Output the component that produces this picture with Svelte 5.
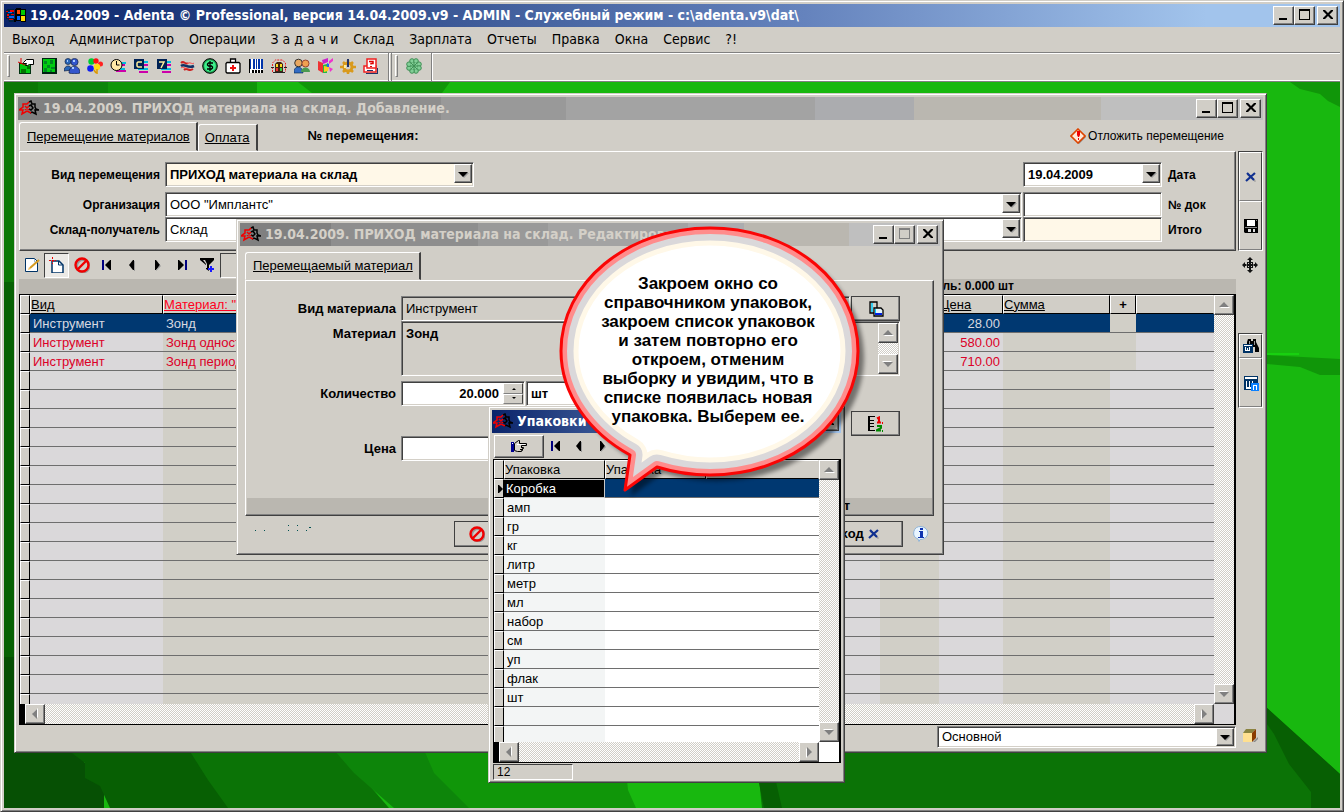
<script>
  const menu = ['Выход', 'Администратор', 'Операции', 'З а д а ч и', 'Склад', 'Зарплата', 'Отчеты', 'Правка', 'Окна', 'Сервис', '?!'];

  const icons = {
    windows: '<path fill="#000" d="M10 1h5v1h5v13h-5v-1h-5v1H8v-3h1V2h1z"/><path fill="#f40" d="M11 3h3v4h-3z"/><path fill="#0c0" d="M15 3h4v5h-4z"/><path fill="#06f" d="M11 9h3v4h-3z"/><path fill="#fd0" d="M15 9h4v5h-4z"/><path fill="#024" d="M1 2h7v13H3l-1-3H0V3h1z"/><path fill="#e00" d="M0 4h2v1H0zM4 3h4v2H4zM1 7h2v2H1zM5 7h3v1H5z"/><path fill="#06f" d="M2 5h4v1H2zM3 9h5v2H3z"/><path fill="#e00" d="M3 12h4v1H3zM1 10h2v1H1z"/>',
    exit: '<path fill="#031" d="M1 5h12v11H1z"/><path fill="#0c1" d="M2 6h10v9H2z"/><path fill="#070" d="M3 11h5v4H3zM9 8h3v3H9z"/><path fill="#fff" stroke="#000" d="M5.500 4.500l3-3h7v5h-4l-2 1h-2l1-2h-3z"/><path fill="none" stroke="#d00" d="M0 4l7 3M3 0v6"/>',
    square: '<path fill="#021" d="M1 0h15v16H1z"/><path fill="#0c1" d="M2 1h12v13H2z"/><path fill="#082" d="M3 3h3v3H3zM9 2h3v4H9zM6 7h3v3H6zM3 10h3v4H3zM10 9h4v2h-4zM9 12h2v2H9z"/>',
    people: '<g fill="#2a66b8" stroke="#124" stroke-width=".7"><circle cx="4" cy="3.500" r="3"/><path d="M0 13c0-6 7-7 8-1z"/><circle cx="10.500" cy="4" r="3.600" fill="#35c"/><path fill="#35c" d="M5 15c0-9 11-9 11 0-2 1-9 1-11 0z"/></g><path fill="#acf" d="M9 2h2v2H9zM8 9h2v2H8zM3 2h1v2H3z"/>',
    balloons: '<circle cx="4.500" cy="3.500" r="3.200" fill="#0c3"/><circle cx="9" cy="3" r="2.700" fill="#f11"/><circle cx="13.500" cy="6" r="2.500" fill="#f22"/><circle cx="3.500" cy="10.500" r="3.300" fill="#12e"/><circle cx="10" cy="9" r="3.200" fill="#fd1"/><path fill="none" stroke="#d90" stroke-width="1.500" d="M10 11v5M7 12l2 3"/>',
    clock: '<path fill="#0bd" d="M8 4h8v2H8zM6 10h9v2H6z"/><path fill="#c0a" d="M9 6h6v2H9zM6 12h10v2H6z"/><circle cx="6.500" cy="7" r="5.500" fill="#ffe9a8" stroke="#000"/><path fill="none" stroke="#000" d="M6.500 3v4h3"/>',
    cdoc: '<path fill="#0bd" d="M8 3h7v2H8zM5 10h10v2H5z"/><path fill="#c0a" d="M9 6h6v2H9zM6 13h9v2H6z"/><path fill="#025" d="M1 1h10v10H1z"/><path fill="none" stroke="#fe9" stroke-width="1.500" d="M9 4H5L4 5v3l1 1h4"/>',
    seven: '<path fill="#0bd" d="M8 3h7v2H8zM5 10h10v2H5z"/><path fill="#c0a" d="M9 6h6v2H9zM6 13h9v2H6z"/><path fill="#025" d="M1 1h10v10H1z"/><path fill="none" stroke="#fe9" stroke-width="1.500" d="M3 4h5L5 10"/>',
    flags: '<path fill="none" stroke="#c22" stroke-width="2" d="M2 5c3-3 4 2 7 0M5 12c3-3 5 2 9-1"/><path fill="none" stroke="#136" stroke-width="2.500" d="M2 8c4-3 6 3 13 0"/><path fill="none" stroke="#f44" d="M8 6c3-3 5 1 7-1M2 10c2-2 4 1 6 0"/>',
    dollar: '<circle cx="8" cy="8" r="7.300" fill="#1e9a4e" stroke="#000"/><circle cx="8" cy="8" r="5.800" fill="#3df08c"/><path fill="none" stroke="#000" stroke-width="1.300" d="M11 5H6.500L5.500 6v1l1 1h3l1 1v1l-1 1H5M8 3v10"/>',
    medkit: '<path fill="#fff" stroke="#000" stroke-width="1.300" d="M2 4.500h12l1 1V14l-1 1H2l-1-1V5.500zM5.500 4V1h5v3"/><path fill="#e11" d="M7 7h2v2h2v2H9v2H7v-2H5V9h2z"/>',
    barcode: '<path fill="#fff" d="M1 1h14v14H1z"/><path fill="#03a" d="M2 1h1v10H2zM5 1h2v10H5zM8 1h1v10H8zM10 1h2v10h-2zM13 1h2v10h-2z"/><path fill="#000" d="M1 1h1v14H1zM4 12h2v3H4zM7 12h2v3H7zM10 12h2v3h-2zM13 12h2v3h-2z"/>',
    gate: '<path fill="none" stroke="#e22" stroke-dasharray="2 1" d="M1.500 14V5l3-3h7l3 3v9"/><path fill="#421" d="M4 6l2-2h4l2 2v8H4z"/><path fill="#fd2" d="M5 6h2v3H5zM9 6h2v3H9z"/><path fill="#e33" d="M5 10h2v3H5z"/><path fill="#3c4" d="M9 10h2v3H9z"/><path fill="#222" d="M0 9h3v1H0zM13 9h3v1h-3zM2 14h12v1H2z"/>',
    couple: '<circle cx="4.500" cy="5" r="3.800" fill="#e9a860" stroke="#333"/><path fill="#336cc4" stroke="#024" stroke-width=".6" d="M0 15c-1-8 9-8 9 0z"/><circle cx="11.500" cy="5.500" r="3.500" fill="#f0a050" stroke="#943"/><path fill="#4a9a50" d="M7 14c0-6 9-6 9 0z"/>',
    chart: '<path fill="#e33" d="M1 3l5 2v10l-5-3z"/><path fill="#c2c" d="M5 2l6-2v4l-5 2z"/><path fill="#2b4" d="M6 7l4-1v9H6z"/><path fill="#fc2" d="M7 8l5 1-1 4-4 1z"/><path fill="#e3c" d="M12 3l4-3v3l-4 3zM12 9l4 2-3 3z"/><path fill="#26e" d="M10 5l2 1v3h-2z"/>',
    gear: '<circle cx="8" cy="9" r="4" fill="none" stroke="#d99a1c" stroke-width="3"/><path stroke="#d99a1c" stroke-width="2.500" d="M8 2v3M8 13v3M0 9h3M13 9h3M3 4l2 2M13 4l-2 2M3 14l2-2M13 14l-2-2"/><path fill="#236" d="M7 1h2v8H7z"/><path fill="#fe9" d="M4 7h2v3H4z"/>',
    helpdoc: '<path fill="#236" d="M14 10h1v6H3v-1h11z"/><path fill="#fff" stroke="#e22" stroke-width="1.500" d="M1 8h12v6H1z"/><path fill="#fff" stroke="#e22" stroke-width="1.500" d="M4 1h9v9H4z"/><path fill="none" stroke="#d00" stroke-width="1.500" d="M6 3.500h4v2H8v1"/><path fill="#d00" d="M7 8h2v1H7z"/><path fill="#236" d="M4 12h6v1H4z"/>',
    flower: '<g fill="#82cf97" stroke="#3f8f55"><circle cx="6" cy="3" r="2.300"/><circle cx="10" cy="3" r="2.300"/><circle cx="13" cy="6.200" r="2.300"/><circle cx="13" cy="10" r="2.300"/><circle cx="10" cy="13" r="2.300"/><circle cx="6" cy="13" r="2.300"/><circle cx="3" cy="10" r="2.300"/><circle cx="3" cy="6.200" r="2.300"/></g><circle cx="8" cy="8" r="3.500" fill="#82cf97"/><path stroke="#3f8f55" d="M4 8h8M8 4v8M5 5l6 6M11 5l-6 6"/>',
    bird: '<path fill="none" stroke="#000" stroke-width="1.500" d="M10 2l2-1 1 3h3v3l1 2 3 1h-4l1 4-4-2-2 1M10 6l2-1 2 3-2 2-2-1"/><path fill="none" stroke="#f00000" stroke-width="1.500" d="M10 2L8 4H4v3l-4 3h4l-1 4 5-3 4 2M6 6l4 4M6 10l4-4"/>',
    edit: '<path fill="#fff" stroke="#036" d="M1.500 1.500h9l3 3v10h-12z"/><path fill="none" stroke="#9bd" d="M10.500 2v3h3"/><path stroke="#d69a20" stroke-width="2" d="M6 11l9-8"/><path fill="#f0c060" d="M5 10l2 2-3 1z"/>',
    add: '<path fill="#fff" stroke="#036" stroke-width="1.500" d="M3 4h7l4 4v8H3z"/><path fill="none" stroke="#036" d="M9.500 4v4h4"/><path stroke="#e00" d="M0 3.500h7M3.500 0v7" stroke-dasharray="2 1"/>',
    deny: '<circle cx="9" cy="9" r="6.200" fill="none" stroke="#999" stroke-width="2.500"/><circle cx="8" cy="8" r="6.500" fill="none" stroke="#f00000" stroke-width="2.400"/><path stroke="#f00000" stroke-width="2.400" d="M4 12l8-8"/>',
    first: '<path fill="#000080" d="M3 3h2v10H3z"/><path fill="#000" d="M6 8l5-5h1v10h-1z"/>',
    prev: '<path fill="#000" d="M5 8l4-5h1v10H9z"/><path fill="#999" d="M10 4h1v10h-1z"/>',
    next: '<path fill="#000" d="M11 8L7 3H6v10h1z"/><path fill="#999" d="M11 8l1 1-5 5v-1z"/>',
    last: '<path fill="#000" d="M10 8L5 3H4v10h1z"/><path fill="#000080" d="M11 3h2v10h-2z"/>',
    filter: '<path fill="#000" d="M1 1h14v2l-5 5v6l-3-2V8L1 3z"/><path fill="#d1cec7" d="M4 3h2l2 4v4H7V7z"/><path fill="#1a1aff" d="M11 9h2v2h2v2h-2v2h-2v-2H9v-2h2z"/>',
    x: '<path fill="#999" d="M5 5l8 7-1 1-8-7z"/><path stroke="#103090" stroke-width="2.200" d="M4 4l7 7M12 4l-9 8"/>',
    disk: '<path fill="#000" d="M1 1h14v14H2l-1-1z"/><path fill="#fff" d="M4 2h8v6H4z"/><path fill="#888" d="M13 2h1v1h-1zM2 9h12v1H2z"/><path fill="#ddd" d="M5 11h3v3H5zM10 11h2v3h-2z"/>',
    move: '<path fill="#111" d="M8 0l3 3H9v2h2v2h2V5l3 3-3 3V9h-2v2H9v2h2l-3 3-3-3h2v-2H5V9H3v2L0 8l3-3v2h2V5h2V3H5z"/><path fill="#d1cec7" d="M6 6h1v1H6zM9 6h1v1H9zM6 9h1v1H6zM9 9h1v1H9zM4 7.500h1v1H4zM11 7.500h1v1h-1z"/>',
    find: '<path fill="#000" d="M5 1h3v2h2V1h3v3l3 6v4h-4V9H8L4 8V4z"/><path fill="#999" d="M6 3h1v3H6zM11 3h1v4h-1z"/><path fill="#036" d="M0 6h10v9H0z"/><path fill="#fff" d="M1 7h8v1H1zM2 9h1v3h1v-2h1v2h1V9h1v4H2z"/>',
    word: '<path fill="#036" d="M1 1h14v14H1z"/><path fill="#fff" d="M2 2h12v2H2zM3 6h1v6h2V6h1v6h2V6h1v3h3v1h-3v4H3z"/><path fill="#0a80ff" d="M8 8h8v8H8z"/><path fill="#fff" d="M10 10h4v5h-1v-4h-2v4h-1z"/>',
    warn: '<path fill="#888" d="M9 2l7 7-7 7-1-1z"/><path fill="#ffe8d8" stroke="#dd4400" stroke-width="1.600" d="M8 1l7 7-7 7-7-7z"/><path fill="#f00000" d="M7 3h3v4L9 9H8L7 7zM8 10h1v2H8z"/>',
    box: '<path fill="#888" d="M11 14l5-5v2l-3 3z"/><path fill="#ffe090" d="M1 5h9v9H1z"/><path fill="#8a8440" d="M1 5l3-4h10l-4 4z"/><path fill="#8a3c00" d="M10 5l4-4v9l-4 4z"/>',
    hand: '<path fill="#000090" d="M0 4h3v10H0z"/><path fill="#fff" d="M1 5h1v1H1z"/><path fill="#d8d4cc" stroke="#000" d="M3.500 5.500l4-3h1v3h7v2h-5v2h2v1h-1v2h-1v1h-4l-3-1z"/><path fill="#fff" d="M6 6h8v1H6z"/><path stroke="#000" d="M10 9.500h2M9 11.500h2"/>',
    copy: '<path fill="#d1cfc7" stroke="#000" stroke-width="1.300" d="M2 1h7v11H2z"/><path stroke="#0cf" stroke-width="1.500" d="M4 2v9"/><path fill="#e4f4f8" stroke="#000" stroke-width="1.300" d="M6 7h7l2 2v6H6z"/><path fill="#0020e0" d="M7 12h7v2H7z"/><path fill="#0cf" d="M7 8h1v4H7z"/>',
    numbered: '<path fill="#000" d="M0 0h7v1H2v3h4v1H2v2h4v1H2v2h4v1H2v3h5v1H0z"/><path fill="none" stroke="#e00" stroke-width="2" d="M9 2.500l2-1v5M9 6.500h4"/><path fill="none" stroke="#080" stroke-width="2" d="M9 10h4v2l-4 2v.500h4"/><path fill="#e00" d="M14 6h1v2h-1z"/><path fill="#080" d="M14 14h1v2h-1z"/>',
    info: '<path fill="#e8f4ff" stroke="#8fb4d8" d="M8 .500a7.300 6.500 0 1 1-1 13l-1 2-1-2.500A7 6.500 0 0 1 8 .500z"/><path fill="#1034b0" d="M7 2h3v2H7zM6 5h4v6h1v1H5v-1h2V6H6z"/>'
  };

  const tools = ['exit', 'square', 'people', 'balloons', 'clock', 'cdoc', 'seven', 'flags', 'dollar', 'medkit', 'barcode', 'gate', 'couple', 'chart', 'gear', 'helpdoc'];
  const gridTools = ['edit', 'add', 'deny', 'first', 'prev', 'next', 'last', 'filter'];
  const goods = [
    { kind: 'Инструмент', name: 'Зонд', price: '28.00' },
    { kind: 'Инструмент', name: 'Зонд односторонний', price: '580.00' },
    { kind: 'Инструмент', name: 'Зонд периодонтальный', price: '710.00' }
  ];
  const goodsRows = [...goods, ...Array(40).fill(null)];
  const packs = ['Коробка', 'амп', 'гр', 'кг', 'литр', 'метр', 'мл', 'набор', 'см', 'уп', 'флак', 'шт', '', ''];
  const balloonPath = 'M630 455C590 433 561 395 561 351C561 283 627 228 710 228S858 283 858 351S793 475 710 475Q683 475 657 467L625 490Z';
</script>

{#snippet icon(name, w = 16)}
  <svg class="ico" viewBox="0 0 {w} 16" width={w} height="16" aria-hidden="true">{@html icons[name]}</svg>
{/snippet}

{#snippet caption(closeOnly, maxOff)}
  <span class="caps">
    {#if !closeOnly}
      <button class="cap" aria-label="Свернуть"><svg viewBox="0 0 16 14" width="16" height="14"><path d="M3 10h8v2H3z" /></svg></button>
      <button class="cap" class:off={maxOff} aria-label="Развернуть"><svg viewBox="0 0 16 14" width="16" height="14"><path fill-rule="evenodd" d="M2 1h11v11H2zM3 3h9v8H3z" /></svg></button>
    {/if}
    <button class="cap close" aria-label="Закрыть"><svg viewBox="0 0 16 14" width="16" height="14"><path d="M3 2h2l3 3 3-3h2v1L9.500 6.500 13 10v1h-2L8 8l-3 3H3v-1l3.500-3.500L3 3z" /></svg></button>
  </span>
{/snippet}

{#snippet arrow(dir)}
  <span class="sb"><svg viewBox="0 0 16 16" width="16" height="16" aria-hidden="true"><g transform="rotate({dir} 8 8)"><path fill="#fff" d="M4 11l5-5 5 5z" /><path fill="#808080" d="M3 10l5-5 5 5z" /></g></svg></span>
{/snippet}

{#snippet combo(id, value, cls)}
  <span class="combo {cls}">
    <select {id} aria-label={id === 'mode' ? 'Режим' : undefined}><option>{value}</option></select>
    <span class="drop"><svg viewBox="0 0 14 14" width="14" height="14" aria-hidden="true"><path fill="#999" d="M4 6h9l-5 5z" /><path d="M2 5h10L7 10z" /></svg></span>
  </span>
{/snippet}

<div class="app">
  <header class="title active">
    {@render icon('windows', 20)}
    <h1>19.04.2009 - Adenta © Professional, версия 14.04.2009.v9 - ADMIN - Служебный режим - c:\adenta.v9\dat\</h1>
    {@render caption(false, false)}
  </header>
  <nav class="menu">
    {#each menu as m}<button>{m}</button>{/each}
  </nav>
  <div class="toolbar">
    <div class="band">
      <i class="grip"></i>
      {#each tools as t}<button aria-label={t}>{@render icon(t)}</button>{/each}
    </div>
    <div class="band">
      <i class="grip"></i>
      <button aria-label="flower">{@render icon('flower')}</button>
    </div>
  </div>

  <main class="desk">
    <svg class="wall" viewBox="0 0 1336 726" preserveAspectRatio="none" aria-hidden="true">
      <path fill="#18b80f" d="M0 0h1336v726H0z" />
      <path fill="#109609" d="M0 0h253v20H0zM294 0l14 11h130l8-11z" />
      <path fill="#0d850a" d="M0 0h104v20H0z" />
      <path fill="#0c7806" d="M0 0h34v400H0z" />
      <path fill="#109609" d="M1286 0h50v25l-12-6-8-7-20-5zM1263 273l73 4v16h-20l-20-8-33-3z" />
      <path fill="#18d010" d="M1263 271h32v2h-32z" />
      <path fill="#086204" d="M0 200h20v526H0z" />
      <path fill="#065004" d="M0 575h10v80h70v25l20 20v26H0z" />
      <path fill="#075f03" d="M64 668h126l36 58H106l-10-22-15-8v-15z" />
      <path fill="#0b7306" d="M185 668h150l50 58H224l-20-28z" />
      <path fill="#0d850a" d="M330 668h90l50 58h-80l-40-35z" />
      <path fill="#109609" d="M420 668h200l4 40 8 18H465l-35-35z" />
      <path fill="#0b7306" d="M752 668h520l56 58H758z" />
      <path fill="#075f03" d="M748 665h16l14 61h-18z" />
      <path fill="#0b7306" d="M1263 626l73 66v34h-73z" />
      <path fill="#075f03" d="M1263 626l73 66v34h-29v-16l-22-28-15-30-7-10z" />
    </svg>

    <section class="win w1">
      <header class="title">
        {@render icon('bird', 20)}
        <h2>19.04.2009. ПРИХОД материала на склад. Добавление.</h2>
        {@render caption(false, false)}
      </header>
      <div class="tabs">
        <button class="tab on">Перемещение материалов</button>
        <button class="tab">Оплата</button>
        <b class="num">№ перемещения:</b>
        <button class="later">{@render icon('warn')}Отложить перемещение</button>
      </div>
      <div class="cols">
        <div class="left">
          <div class="panel form">
            <label for="kind">Вид перемещения</label>
            {@render combo('kind', 'ПРИХОД материала на склад', 'cream bold short')}
            {@render combo('date', '19.04.2009', 'bold')}
            <label class="r" for="date">Дата</label>
            <span class="space"></span>
            <label for="org">Организация</label>
            {@render combo('org', 'ООО "Имплантс"', '')}
            <input id="doc" />
            <label class="r" for="doc">№ док</label>
            <label for="store">Склад-получатель</label>
            {@render combo('store', 'Склад', '')}
            <input id="total" class="cream" />
            <label class="r" for="total">Итого</label>
          </div>
          <div class="gridtools">
            {#each gridTools as t}<button class:pressed={t === 'add'} aria-label={t}>{@render icon(t)}</button>{/each}
            <span class="well"></span>
          </div>
          <div class="strip">Прибыль: 0.000 шт</div>
          <div class="grid">
            <div class="view">
              <table>
                <colgroup><col class="c-sel" /><col class="c-kind" /><col /><col class="c-a" /><col class="c-b" /><col class="c-price" /><col class="c-sum" /><col class="c-plus" /><col class="c-rest" /></colgroup>
                <thead><tr><th></th><th><u>Вид</u></th><th><u class="red">Материал: "Зонд"</u></th><th></th><th></th><th><u>Цена</u></th><th><u>Сумма</u></th><th class="c">+</th><th class="end"></th></tr></thead>
                <tbody>
                  {#each goodsRows as g, i}
                    <tr class:sel={i === 0} class:data={g}>
                      <td class="mark"></td><td>{g?.kind ?? ''}</td><td class="dk">{g?.name ?? ''}</td><td></td><td class="dk"></td><td class="n">{g?.price ?? ''}</td><td class="dk"></td><td class="plus"></td><td></td>
                    </tr>
                  {/each}
                </tbody>
              </table>
            </div>
            <div class="vs">{@render arrow(0)}{@render arrow(180)}</div>
            <div class="hs">{@render arrow(-90)}{@render arrow(90)}</div>
            <div class="corner"></div>
          </div>
          <div class="foot">{@render combo('mode', 'Основной', '')}</div>
        </div>
        <aside class="side">
          <div class="well2"><button aria-label="Отмена">{@render icon('x')}</button><button aria-label="Сохранить">{@render icon('disk')}</button></div>
          <div class="mv">{@render icon('move')}</div>
          <div class="well2 b"><button aria-label="Найти">{@render icon('find')}</button><button aria-label="Документ">{@render icon('word')}</button></div>
          <div class="bx">{@render icon('box')}</div>
        </aside>
      </div>
    </section>

    <section class="win w2">
      <header class="title">
        {@render icon('bird', 20)}
        <h2>19.04.2009. ПРИХОД материала на склад. Редактирование.</h2>
        {@render caption(false, true)}
      </header>
      <div class="tabs2"><button class="tab on">Перемещаемый материал</button></div>
      <div class="panel p2">
        <div class="row">
          <label for="mkind">Вид материала</label>
          <input id="mkind" class="grey" value="Инструмент" />
          <button class="btn" aria-label="Копировать">{@render icon('copy')}</button>
        </div>
        <div class="row memo">
          <label for="mat">Материал</label>
          <span class="area"><textarea id="mat" value="Зонд"></textarea><span class="vs">{@render arrow(0)}{@render arrow(180)}</span></span>
        </div>
        <div class="row qty">
          <label for="qty">Количество</label>
          <span class="spin"><input id="qty" value="20.000" /><span class="ud"><button aria-label="Больше"><svg viewBox="0 0 5 3" width="5" height="3"><path d="M1 3h4L3 1z" /></svg></button><button aria-label="Меньше"><svg viewBox="0 0 5 3" width="5" height="3"><path d="M1 0h4L3 2z" /></svg></button></span></span>
          <input class="unit" aria-label="Единица" value="шт" />
        </div>
        <div class="row end"><button class="btn" aria-label="Нумерация">{@render icon('numbered')}</button></div>
        <div class="row">
          <label for="price">Цена</label>
          <input id="price" class="price" />
        </div>
        <div class="sum">Итого: 20.000 шт</div>
      </div>
      <div class="acts">
        <svg class="dots" viewBox="0 0 60 8" width="60" height="8" aria-hidden="true"><path fill="#005050" d="M0 5h1v1H0zM9 5h1v1H9zM33 0h1v1h-1zM33 5h1v1h-1zM42 0h1v1h-1zM42 5h1v1h-1zM51 5h1v1h-1zM54 2h2v1h-2z" /></svg>
        <button class="btn no" aria-label="Отмена">{@render icon('deny')}</button>
        <button class="btn out">Выход {@render icon('x')}</button>
        {@render icon('info')}
      </div>
    </section>

    <section class="win w3">
      <header class="title active">
        {@render icon('bird', 20)}
        <h2>Упаковки</h2>
        {@render caption(true, false)}
      </header>
      <div class="tools3">
        <button class="btn" aria-label="Выбрать">{@render icon('hand')}</button>
        {#each ['first', 'prev', 'next'] as t}<button class="flat" aria-label={t}>{@render icon(t)}</button>{/each}
      </div>
      <div class="grid g3">
        <div class="view">
          <table>
            <colgroup><col class="c-sel" /><col class="c-pack" /><col class="c-pack" /><col /></colgroup>
            <thead><tr><th></th><th>Упаковка</th><th>Упаковка</th><th class="end"></th></tr></thead>
            <tbody>
              {#each packs as p, i}
                <tr class:sel={i === 0}><td class="mark">{#if i === 0}<svg viewBox="0 0 5 8" width="5" height="8" aria-hidden="true"><path d="M0 0h1l4 4-4 4H0z" /></svg>{/if}</td><td class="pk">{p}</td><td></td><td></td></tr>
              {/each}
            </tbody>
          </table>
        </div>
        <div class="vs">{@render arrow(0)}{@render arrow(180)}</div>
        <div class="hs">{@render arrow(-90)}{@render arrow(90)}</div>
        <div class="corner"></div>
      </div>
      <div class="count">12</div>
    </section>

    <div class="balloon">
      <svg viewBox="550 220 330 290" width="330" height="290" aria-hidden="true">
        <defs>
          <clipPath id="bc"><path d={balloonPath} /></clipPath>
          <filter id="bs" x="-10%" y="-10%" width="125%" height="125%"><feGaussianBlur stdDeviation="2" /></filter>
        </defs>
        <path d={balloonPath} transform="translate(6 6)" fill="#000" opacity=".45" filter="url(#bs)" />
        <g clip-path="url(#bc)" stroke-linejoin="round">
          <path d={balloonPath} fill="#fff" stroke="#fff8e8" stroke-width="35" />
          <path d={balloonPath} fill="none" stroke="#dad8da" stroke-width="25" />
          <path d={balloonPath} fill="none" stroke="#ff8c8c" stroke-width="12" />
        </g>
        <path d={balloonPath} fill="none" stroke="#fa0505" stroke-width="3" stroke-linejoin="round" />
      </svg>
      <p>Закроем окно со<br />справочником упаковок,<br />закроем список упаковок<br />и затем повторно его<br />откроем, отменим<br />выборку и увидим, что в<br />списке появилась новая<br />упаковка. Выберем ее.</p>
    </div>
  </main>
</div>

<style>
  :global(body) { margin: 0; background: #d1cec7; }
  * { box-sizing: border-box; }
  .app {
    height: 100vh; display: flex; flex-direction: column; padding: 3px; overflow: hidden;
    border: 1px solid; border-color: #d1cec7 #404040 #404040 #d1cec7; background: #d1cec7;
    box-shadow: inset 1px 1px #fff, inset -1px -1px #808080;
    font: 13px/16px "Liberation Sans", Arial, sans-serif; color: #000;
  }
  button, input, select, textarea { font: inherit; color: inherit; margin: 0; border-radius: 0; }
  button { border: 0; padding: 0; background: none; display: flex; align-items: center; justify-content: center; white-space: nowrap; }
  svg { display: block; flex: none; }

  .title {
    flex: none; height: 23px; display: flex; align-items: center; gap: 4px; padding: 0 2px 1px; color: #d4d0c8;
    background: linear-gradient(90deg, #808080 13%, #8e8e8e 13% 34%, #999 34% 44%, #a3a3a3 44% 64%, #abacaf 64% 72%, #bab7b0 72% 87%, #bfbfbf 87%);
  }
  .title.active { color: #fff; background: linear-gradient(90deg, #0a246a, #3a5795 32%, #6583bd 60%, #a2c4ec 90%); }
  h1, h2 { flex: 1; min-width: 0; margin: 0; overflow: hidden; white-space: nowrap; font: bold 14px/20px Tahoma, "DejaVu Sans Condensed", sans-serif; }
  .caps { display: flex; flex: none; }
  .cap, .btn, .sb, .drop {
    background: #d1cec7; border: 1px solid; border-color: #fff #404040 #404040 #fff; box-shadow: inset -1px -1px #808080;
  }
  .cap { width: 21px; height: 19px; }
  .cap.close { margin-left: 2px; }
  .cap.off { fill: #808080; }

  .menu { flex: none; height: 25px; display: flex; align-items: center; padding: 0 0 2px 8px; gap: 15px; font: 14px/18px Tahoma, "DejaVu Sans Condensed", sans-serif; }
  .toolbar { flex: none; height: 30px; display: flex; border-top: 1px solid #808080; border-bottom: 1px solid #808080; box-shadow: inset 0 1px #fff, inset 0 -1px #fff; }
  .band { display: flex; align-items: center; padding: 0 6px 2px 3px; border-right: 1px solid #808080; box-shadow: 1px 0 #fff; }
  .band + .band { margin-left: 2px; border-left: 1px solid #808080; }
  .band button { width: 23px; height: 23px; }
  .grip { width: 3px; height: 22px; margin-right: 4px; border: 1px solid; border-color: #fff #808080 #808080 #fff; }

  .desk { flex: 1; min-height: 0; position: relative; overflow: hidden; }
  .wall { position: absolute; inset: 0; width: 100%; height: 100%; }
  .win {
    position: absolute; display: flex; flex-direction: column; padding: 3px; background: #d1cec7;
    border: 1px solid; border-color: #d1cec7 #404040 #404040 #d1cec7; box-shadow: inset 1px 1px #fff, inset -1px -1px #808080;
  }
  .w1 { left: 10px; right: 73px; top: 11px; bottom: 55px; }
  .w2 { left: 232px; top: 137px; width: 708px; }
  .w3 { left: 484px; top: 324px; width: 357px; padding-bottom: 2px; }
  .win .title { padding-left: 1px; }

  .tabs { flex: none; height: 31px; display: flex; align-items: flex-end; padding: 0 39px 0 1px; }
  .tab { height: 27px; padding: 0 6px; text-decoration: underline; border: 1px solid; border-color: #fff transparent transparent #fff; border-right: 2px solid #404040; border-radius: 3px 0 0 0; }
  .tab.on { height: 29px; padding: 0 6px 0 7px; }
  .num { align-self: center; margin-left: 50px; }
  .later { align-self: center; margin-left: auto; gap: 2px; font-size: 12px; }

  .cols { flex: 1; min-height: 0; display: flex; gap: 2px; padding-left: 1px; }
  .left { flex: 1; min-width: 0; display: flex; flex-direction: column; }
  .panel { border: 1px solid; border-color: #fff #404040 #404040 #fff; box-shadow: inset -1px -1px #808080; }
  .form {
    flex: none; display: grid; grid-template-columns: 144px minmax(0, 1fr) 139px 72px; grid-template-rows: 25px 5px 25px 25px; align-items: center; column-gap: 1px; padding: 10px 0 8px;
  }
  .form .space { grid-column: 1 / -1; height: 5px; }
  label { font-weight: bold; font-size: 12px; text-align: right; padding-right: 4px; white-space: nowrap; }
  label.r { text-align: left; padding: 0 0 0 5px; }
  input, .combo, .area, .spin {
    height: 25px; min-width: 0; width: 100%; padding: 0 4px; background: #fff;
    border: 1px solid; border-color: #808080 #fff #fff #808080; box-shadow: inset 1px 1px #404040, inset -1px -1px #d4d0c8; outline: 0;
  }
  .combo { display: flex; align-items: center; padding: 1px; }
  .combo select { flex: 1; min-width: 0; height: 100%; padding: 0 0 0 3px; appearance: none; border: 0; background: none; outline: 0; }
  .combo.bold select { font-weight: bold; }
  .drop { width: 18px; height: 19px; align-self: flex-start; display: flex; align-items: center; justify-content: center; }
  .form .short { width: 309px; }
  .combo.cream, .cream { background: #fff8e8; }

  .gridtools { flex: none; height: 28px; display: flex; align-items: center; padding: 1px 0; }
  .gridtools button { width: 25px; height: 25px; }
  .gridtools .pressed { border: 1px solid; border-color: #404040 #fff #fff #404040; background: #ebe9e5; }
  .well { width: 400px; height: 25px; margin-left: 1px; border: 1px solid; border-color: #404040 #fff #fff #404040; }
  .strip { flex: none; height: 15px; background: #bab7b0; font: bold 12px/15px "Liberation Sans", Arial, sans-serif; text-align: right; padding-right: 222px; }

  .grid { flex: 1; min-height: 0; display: grid; grid-template-columns: minmax(0, 1fr) 20px; grid-template-rows: minmax(0, 1fr) 20px; border: 1px solid #000; border-right-width: 2px; background: #fff; }
  .view { overflow: hidden; background: #dad8da; }
  table { width: 100%; table-layout: fixed; border-spacing: 0; font-size: 12px; }
  th { height: 19px; padding: 0; text-align: left; font-weight: normal; font-size: 13px; line-height: 16px; background: #d1cec7; border: 1px solid; border-color: #fff #000 #000 #fff; white-space: nowrap; overflow: hidden; }
  th.c { text-align: center; font-weight: bold; }
  th.end { border-right-color: transparent; }
  td { height: 19px; padding: 2px 3px 0; line-height: 16px; border-bottom: 1px solid #6e6e6e; white-space: nowrap; overflow: hidden; }
  td.dk { background: #d1cfc7; }
  td.mark { padding: 0 0 0 3px; background: #d1cec7; border: 1px solid; border-color: #fff #000 #000 #fff; }
  td.n { text-align: right; }
  .data td { color: #dc0028; font-size: 13px; }
  .data .plus { background: #d1cfc7; }
  .sel td:not(.mark) { background: #003871; }
  .data.sel td { color: #d8d8e0; }
  .data.sel td.plus { background: #d1cfc7; }
  .red { color: #ff0020; }
  .c-sel { width: 10px; } .c-kind { width: 133px; } .c-a { width: 160px; } .c-b { width: 59px; } .c-price { width: 64px; }
  .c-sum { width: 107px; } .c-plus { width: 26px; } .c-rest { width: 78px; } .c-pack { width: 101px; }
  .vs, .hs { display: flex; justify-content: space-between; background: repeating-conic-gradient(#fff 0 25%, #d1cec7 0 50%) 0 0 / 2px 2px; }
  .vs { flex-direction: column; }
  .hs { border-left: 5px solid #000; }
  .sb { width: 20px; height: 20px; flex: none; display: flex; align-items: center; justify-content: center; }
  .corner { background: #dad8da; }
  .foot { flex: none; height: 24px; display: flex; justify-content: flex-end; padding-top: 1px; }
  .foot .combo { width: 299px; height: 22px; }
  .foot .drop { height: 18px; }

  .side { width: 25px; display: flex; flex-direction: column; flex: none; }
  .well2 { border: 1px solid; border-color: #404040 #fff #fff #404040; }
  .well2 button { width: 100%; height: 49px; border: 1px solid; border-color: #fff #404040 #808080 #fff; }
  .well2.b button:first-child { height: 24px; }
  .mv { height: 82px; padding: 6px 0 0 4px; }
  .bx { margin-top: auto; padding: 0 0 5px 4px; }

  .tabs2 { padding: 6px 0 0 5px; }
  .tabs2 .tab { height: 28px; }
  .p2 { margin: 0 6px 0 5px; padding-top: 15px; display: flex; flex-direction: column; }
  .row { display: flex; padding-right: 33px; height: 25px; gap: 1px; }
  .row label { width: 154px; flex: none; padding-top: 5px; font-size: 13px; }
  .row.memo { height: 55px; }
  .row.qty { margin: 5px 0 5px; }
  .row.end { justify-content: flex-end; }
  .row .btn { width: 49px; flex: none; outline: 1px solid #404040; outline-offset: -1px; }
  .grey { background: #d1cec7; }
  .area { flex: 1; height: 55px; padding: 1px; display: flex; background: #d1cec7; }
  textarea { flex: 1; resize: none; border: 0; outline: 0; background: none; font-weight: bold; padding: 3px; overflow: hidden; }
  .spin { width: 124px; padding: 1px; display: flex; }
  .spin input { height: 100%; border: 0; box-shadow: none; background: none; text-align: right; font-weight: bold; }
  .ud { width: 20px; flex: none; display: flex; flex-direction: column; }
  .ud button { flex: 1; background: #d1cec7; border: 1px solid; border-color: #fff #404040 #808080 #fff; }
  .unit { width: 120px; font-weight: bold; }
  .price { width: 200px; }
  .sum { margin: 37px 1px 1px; height: 16px; background: #bab7b0; font: bold 13px/16px "Liberation Sans", Arial, sans-serif; text-align: right; padding-right: 82px; }
  .acts { display: flex; align-items: center; height: 35px; padding: 0 11px 0 14px; }
  .acts .dots { margin: -10px 139px 0 1px; }
  .acts .btn { height: 26px; width: 104px; font-weight: bold; gap: 2px; outline: 1px solid #404040; outline-offset: -1px; }
  .acts .no { justify-content: flex-start; padding-left: 14px; }
  .acts .out { margin-left: auto; margin-right: 10px; }

  .tools3 { display: flex; height: 26px; align-items: center; padding-left: 2px; }
  .tools3 .btn { width: 50px; height: 23px; }
  .flat { width: 23px; height: 22px; }
  .g3 { flex: none; height: 304px; margin: 0 0 0 1px; background: #fff; }
  .g3 .view { background: #fff; }
  .g3 .corner { background: #fff; }
  .g3 .pk { background: #f3f5f5; padding: 2px 3px 0; }
  .g3 td { font-size: 13px; }
  .g3 .sel .pk { background: #000; color: #fff; border: 1px solid #c8c8c8; border-left: 0; padding: 0 2px; }
  .count { width: 80px; height: 16px; margin: 1px 1px 0; padding-left: 3px; font-size: 12px; line-height: 14px; border: 1px solid; border-color: #404040 #fff #fff #404040; }

  .balloon { position: absolute; left: 546px; top: 138px; width: 330px; }
  .balloon p { position: absolute; left: 8px; right: 22px; top: 54px; margin: 0; text-align: center; font: bold 17px/19px "Liberation Sans", Arial, sans-serif; }
</style>
